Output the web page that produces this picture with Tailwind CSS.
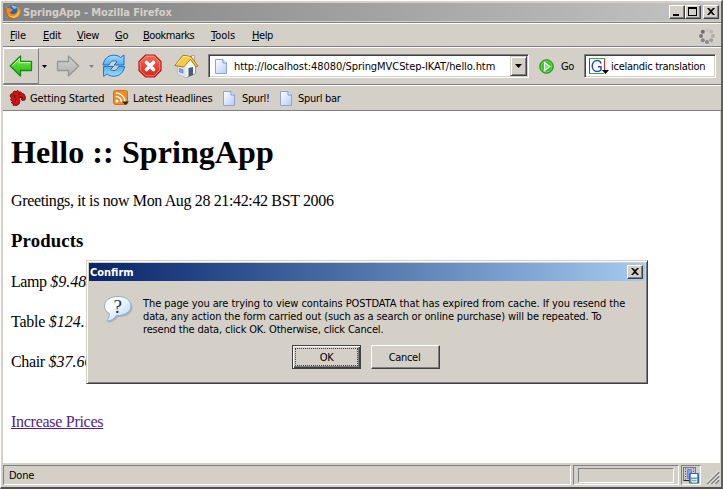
<!DOCTYPE html>
<html lang="en">
<head>
<meta charset="utf-8">
<title>SpringApp - Mozilla Firefox</title>
<script src="https://cdn.jsdelivr.net/npm/@tailwindcss/browser@4"></script>
</head>
<body class="w-[723px] h-[489px] overflow-hidden">
<svg width="0" height="0" class="absolute">
  <defs>
    <linearGradient id="green" x1="0" y1="0" x2="0" y2="1"><stop offset="0" stop-color="#b5f58c"/><stop offset=".45" stop-color="#4fd62f"/><stop offset="1" stop-color="#2fb41c"/></linearGradient>
    <linearGradient id="grey" x1="0" y1="0" x2="0" y2="1"><stop offset="0" stop-color="#d2d2d0"/><stop offset="1" stop-color="#b0b0ae"/></linearGradient>
    <linearGradient id="blue" x1="0" y1="0" x2="0" y2="1"><stop offset="0" stop-color="#a4dcfa"/><stop offset="1" stop-color="#4fb0ee"/></linearGradient>
    <linearGradient id="red" x1="0" y1="0" x2="0" y2="1"><stop offset="0" stop-color="#f4705a"/><stop offset="1" stop-color="#d8201c"/></linearGradient>
    <linearGradient id="paper" x1="0" y1="0" x2="1" y2="1"><stop offset="0" stop-color="#fff"/><stop offset="1" stop-color="#b4cdf8"/></linearGradient>
    <linearGradient id="bubble" x1="0" y1="0" x2="1" y2="1"><stop offset="0.3" stop-color="#fff"/><stop offset="1" stop-color="#a8d4f6"/></linearGradient>
    <symbol id="page" viewBox="0 0 12 15"><path d="M.5.5h7.500l3.500 3.500v10.500h-11z" fill="url(#paper)" stroke="#8fa3d8"/><path d="M8 .5v3.500h3.500" fill="#e8f0ff" stroke="#7d93cf"/></symbol>
  </defs>
</svg>
<div class="relative w-[723px] h-[489px] bg-[#d4d0c8] border-l border-t border-l-white border-t-white border-r-2 border-r-[#606060] border-b-2 border-b-[#505050] pl-[2px] pt-[2px] flex flex-col text-black text-[11px] leading-[13px] font-['DejaVu_Sans_Condensed','DejaVu_Sans',sans-serif] whitespace-nowrap">
  <!-- title bar -->
  <header class="h-[18px] w-[717px] shrink-0 bg-linear-to-r from-[#808080] to-[#c4c4c4] flex items-center">
    <svg class="ml-[2px] shrink-0" width="16" height="16" viewBox="0 0 16 16"><circle cx="8.500" cy="7.500" r="6.500" fill="#2c63b4"/><path d="M6 2c3-1 5 0 6 2l-3 1z" fill="#7fc0ee"/><path d="M1 3l2 1.500 2-1.500c0 2 1 2 3 2.500l-1 1.500-2 1c1 3 5 3 7 0 .8-1.500.5-4-1-6 3 1 5 4 4.500 7-.6 3-4 5-7 5-5 0-8-4-7.500-9z" fill="#f08a1c"/><path d="M14 5c2 5-2 9-6 9-3 0-5-1.500-6-4 3 3 8 3 10 0 1-1.500 1.500-3 2-5z" fill="#fbc233"/><path d="M1 4c-1 5 2 10 7 10.500" fill="none" stroke="#c9501a"/></svg>
    <span class="ml-[2px] font-bold text-[#d4d0c8] tracking-[-0.1px]">SpringApp - Mozilla Firefox</span>
    <div class="ml-auto mr-px flex text-black">
      <div class="w-4 h-[14px] border border-t-white border-l-white border-r-[#404040] border-b-[#404040] shadow-[inset_-1px_-1px_#808080] bg-[#d4d0c8]"><svg width="14" height="12"><path d="M3 8h6v2H3z"/></svg></div>
      <div class="w-4 h-[14px] border border-t-white border-l-white border-r-[#404040] border-b-[#404040] shadow-[inset_-1px_-1px_#808080] bg-[#d4d0c8]"><svg width="14" height="12"><path d="M2 1h9v9H2zM3 3v6h7V3z" fill-rule="evenodd"/></svg></div>
      <div class="ml-[2px] w-4 h-[14px] border border-t-white border-l-white border-r-[#404040] border-b-[#404040] shadow-[inset_-1px_-1px_#808080] bg-[#d4d0c8]"><svg width="14" height="12"><path d="M3 2h2l2 2 2-2h2L8 5.500 11 9H9L7 7 5 9H3l3-3.500z"/></svg></div>
    </div>
  </header>
  <!-- menu bar -->
  <nav class="mt-px h-[25px] w-[718px] shrink-0 border-t border-t-[#808080] border-b border-b-[#808080] shadow-[inset_0_1px_white] flex items-center pl-[7px] pt-[2px]">
    <span class="w-[33px] tracking-[-0.15px]"><u>F</u>ile</span>
    <span class="w-[34px] tracking-[-0.3px]"><u>E</u>dit</span>
    <span class="w-[38px] tracking-[-0.4px]"><u>V</u>iew</span>
    <span class="w-[28px] tracking-[-0.3px]"><u>G</u>o</span>
    <span class="w-[68px] tracking-[-0.45px]"><u>B</u>ookmarks</span>
    <span class="w-[41px]"><u>T</u>ools</span>
    <span class="tracking-[-0.4px]"><u>H</u>elp</span>
    <svg class="ml-auto mr-[6px]" width="16" height="16" viewBox="0 0 16 16"><g><circle cx="8" cy="2" r="2" fill="#c8c5c0"/><circle cx="12.200" cy="3.800" r="2" fill="#bcb9b5"/><circle cx="14" cy="8" r="2" fill="#b0aeaa"/><circle cx="12.200" cy="12.200" r="2" fill="#a09f9c"/><circle cx="8" cy="14" r="2" fill="#8c8b89"/><circle cx="3.800" cy="12.200" r="2" fill="#858482"/><circle cx="2" cy="8" r="2" fill="#7b7a79"/><circle cx="3.800" cy="3.800" r="2" fill="#6e6d6c"/></g></svg>
  </nav>
  <!-- navigation toolbar -->
  <div class="h-[38px] w-[718px] shrink-0 border-t border-t-white border-b border-b-[#808080] flex items-center">
    <div class="w-9 h-9 shrink-0 border border-t-white border-l-white border-r-[#808080] border-b-[#808080] flex items-center justify-center">
      <svg width="24" height="22" viewBox="0 0 24 22"><path d="M1.200 11L11.500 1v5.500h11v9h-11V21z" fill="url(#green)" stroke="#158a16" stroke-width="1.300" stroke-linejoin="round"/><path d="M3.200 10.700L10.500 3.500V7.600h11" fill="none" stroke="#d2fbb8"/></svg>
    </div>
    <svg class="ml-[3px] shrink-0" width="5" height="3"><path d="M0 0h5L2.500 3z"/></svg>
    <svg class="ml-[9px] shrink-0" width="24" height="22" viewBox="0 0 24 22"><path d="M22.800 11L12.500 1v5.500h-11v9h11V21z" fill="url(#grey)" stroke="#969694" stroke-width="1.300" stroke-linejoin="round"/></svg>
    <svg class="ml-[9px] shrink-0" width="5" height="3"><path d="M0 0h5L2.500 3z" fill="#808080"/></svg>
    <svg class="ml-[8px] shrink-0" width="24" height="24" viewBox="0 0 24 24"><path id="half" d="M1 11C2 4.500 6.500 1.200 11.800 1.200c3 0 5.200.8 6.700 2.300L22 1v10H12l3.200-3.200C12 5.800 8.500 7 7 11z" fill="url(#blue)" stroke="#1f6fc4" stroke-linejoin="round"/><use href="#half" transform="rotate(180 11.800 11.700)"/></svg>
    <svg class="ml-[12px] shrink-0" width="24" height="24" viewBox="0 0 24 24"><path d="M7.500 1h9L23 7.500v9L16.500 23h-9L1 16.500v-9z" fill="url(#red)" stroke="#b01818" stroke-width="1.200"/><path d="M8 2.200h8L21.800 8v8L16 21.800H8L2.200 16V8z" fill="none" stroke="#f59a88" stroke-width=".8"/><path d="M8.500 8.500l7 7m0-7l-7 7" stroke="#fff" stroke-width="3.600" stroke-linecap="round"/></svg>
    <svg class="ml-[12px] shrink-0" width="25" height="24" viewBox="0 0 25 24"><path d="M3.500 11.500V20l9 3.500 9-4V11L17 4z" fill="#f2f4f8" stroke="#8289a0" stroke-width=".8"/><path d="M3.500 12v8l9 3.500V13L9 9z" fill="#dfe4ee"/><path d="M17.500 1.500h3V8l-3-3z" fill="#e8ecf4" stroke="#8a90a5" stroke-width=".7"/><path d="M.8 11.500L9 1.200 17 2.600 24 12l-2 1-5.500-7.500L9.500 13z" fill="#f4cb45" stroke="#a37a14" stroke-linejoin="round"/><path d="M2.500 10.500L9.500 2.300l6 1" fill="none" stroke="#fdec8e"/><path d="M14.500 14l4.500-1v8l-4.500 1.800z" fill="#4a5a78"/><path d="M5.500 14.500l3.500 1.200v3.500L5.500 18z" fill="#7fa6de" stroke="#657594" stroke-width=".6"/></svg>
    <div class="ml-[9px] w-[321px] h-[24px] shrink-0 bg-white border border-t-[#808080] border-l-[#808080] border-r-white border-b-white p-px shadow-[inset_1px_1px_#404040,inset_-1px_-1px_#d4d0c8] flex items-center">
      <svg class="ml-[5px] shrink-0" width="12" height="15"><use href="#page"/></svg>
      <span class="ml-[7px] mt-px tracking-[-0.06px]">http://localhost:48080/SpringMVCStep-IKAT/hello.htm</span>
      <div class="ml-auto w-[17px] h-5 shrink-0 border border-t-[#d4d0c8] border-l-[#d4d0c8] border-r-[#404040] border-b-[#404040] shadow-[inset_1px_1px_white,inset_-1px_-1px_#808080] bg-[#d4d0c8] flex items-center justify-center"><svg width="7" height="4"><path d="M0 0h7L3.500 4z"/></svg></div>
    </div>
    <svg class="ml-[10px] shrink-0" width="15" height="15" viewBox="0 0 15 15"><circle cx="7.500" cy="7.500" r="6.800" fill="#37bd25" stroke="#1e8f18"/><circle cx="7.500" cy="7.500" r="5.300" fill="none" stroke="#7be267" stroke-width=".8"/><path d="M5.500 3.500v8l5.500-4z" fill="#7ee668" stroke="#fff" stroke-width="1.200"/></svg>
    <span class="ml-[7px] mt-px w-[23px] tracking-[-0.3px]">Go</span>
    <div class="w-[132px] h-[24px] shrink-0 bg-white border border-t-[#808080] border-l-[#808080] border-r-white border-b-white shadow-[inset_1px_1px_#404040,inset_-1px_-1px_#d4d0c8] flex items-center">
      <svg class="ml-[4px] shrink-0" width="21" height="17" viewBox="0 0 21 17"><path d="M0 0h16v16H0z" fill="#fff"/><path d="M.5 16V0" stroke="#1e50d2"/><path d="M0 .5h16" stroke="#36a83a"/><path d="M15.500 1v11" stroke="#d42a20"/><path d="M0 15.500h15" stroke="#36a83a"/><path d="M12 5.500C11.500 3.200 10 2.500 8.200 2.500 5.200 2.500 3.200 5 3.200 8s2 5.500 5 5.500c1.600 0 2.800-.6 3.800-1.500V8.800H9" fill="none" stroke="#2848b8" stroke-width="1.500"/><path d="M13 12h7l-3.500 4z"/></svg>
      <span class="ml-[1px] mt-px tracking-[-0.28px]">icelandic translation</span>
    </div>
  </div>
  <!-- bookmarks toolbar -->
  <div class="h-[26px] w-[718px] shrink-0 border-t border-t-white border-b border-b-[#808080] flex items-center pl-[6px]">
    <svg class="shrink-0" width="17" height="16" viewBox="0 0 17 16"><path d="M1 6l1-2 2-1 1-2 2 .5L9 .5l1 1.500h2l1 1.500 2 .5 1.500 3-.5 3-3 .5-1-1.500 2-.5-3-1-1 1.500 1 2-1 3-3 2-1-1-2 .5.500-2-2-.5 1-2-2-1 1-2z" fill="#d80f0f" stroke="#5a0806" stroke-width=".8"/><path d="M9 4.500l2-.5M5 5l1 3m1 1l-1 3m4-5l4 .5" stroke="#3a0504"/></svg>
    <span class="ml-[4px] mt-px w-[83px] tracking-[-0.15px]">Getting Started</span>
    <svg class="shrink-0" width="16" height="16" viewBox="0 0 16 16"><rect x=".5" y=".5" width="14" height="14" rx="2" fill="#f28a22" stroke="#dc6c10"/><circle cx="4" cy="11" r="1.500" fill="#fff"/><path d="M2.700 6.500a5.500 5.500 0 0 1 5.800 5.500M2.700 3a9 9 0 0 1 9.300 9" fill="none" stroke="#fff" stroke-width="1.600"/><path d="M9 11.500h7L12.500 15z" fill="#222"/></svg>
    <span class="ml-[4px] mt-px w-[90px] tracking-[-0.2px]">Latest Headlines</span>
    <svg class="shrink-0" width="12" height="15"><use href="#page"/></svg>
    <span class="ml-[7px] mt-px w-[38px] tracking-[-0.35px]">Spurl!</span>
    <svg class="shrink-0" width="12" height="15"><use href="#page"/></svg>
    <span class="ml-[6px] mt-px tracking-[-0.3px]">Spurl bar</span>
  </div>
  <!-- page -->
  <main class="w-[717px] h-[352px] shrink-0 bg-white px-2 font-['Liberation_Serif',serif] text-[16px] leading-[20px]">
    <h1 class="pt-[22px] text-[32px] leading-[38px] font-bold tracking-[0.08px]">Hello :: SpringApp</h1>
    <p class="mt-[20px] tracking-[-0.36px]">Greetings, it is now Mon Aug 28 21:42:42 BST 2006</p>
    <h3 class="mt-[20px] text-[18.700px] font-bold tracking-[0.15px]">Products</h3>
    <p class="mt-[21px]"><span class="tracking-[-0.4px]">Lamp </span><i>$9.48</i></p>
    <p class="mt-[20px]"><span class="tracking-[-0.25px]">Table </span><i>$124.75</i></p>
    <p class="mt-[20px]"><span class="tracking-[-0.35px]">Chair </span><i>$37.66</i></p>
    <p class="mt-[40px]"><a class="text-[#551a8b] underline tracking-[-0.28px]">Increase Prices</a></p>
  </main>
  <!-- status bar -->
  <footer class="w-[718px] h-[24px] shrink-0 pt-[2px] flex gap-[2px]">
    <div class="w-[568px] h-5 border border-t-[#808080] border-l-[#808080] border-r-white border-b-white pl-[5px] flex items-center tracking-[-0.25px]">Done</div>
    <div class="w-[106px] h-5 border border-t-[#808080] border-l-[#808080] border-r-white border-b-white pl-1 pt-[2px]"><div class="w-[96px] h-[15px] border border-t-[#808080] border-l-[#808080] border-r-white border-b-white"></div></div>
    <div class="w-[20px] h-5 border border-t-[#808080] border-l-[#808080] border-r-white border-b-white"><svg class="ml-px mt-px" width="16" height="17" viewBox="0 0 16 17"><rect x=".5" y=".5" width="12" height="13" fill="#c8c8cc" stroke="#77787e"/><path d="M2.500 1.500v11M10.500 1.500v11" stroke="#55565c" stroke-dasharray="1 1.500"/><path d="M4.500 2.500h4v9h-4z" fill="#8a9ce8" stroke="#7d80b4"/><path d="M1 13.500h6" stroke="#222"/><path d="M6.500 6.500h9v9.500h-9z" fill="#5b92e2" stroke="#2d62b4"/><path d="M8 7h6v3.500H8zM8.500 12h5.500v3.500H8.500z" fill="#fff"/><path d="M9 13.500h4.500" stroke="#6cc83c" stroke-width="1.500"/></svg></div>
    <svg class="ml-[4px] mt-[6px] shrink-0" width="13" height="13" viewBox="0 0 13 13"><path d="M0 13L12 1M4 13l8-8M8 13l4-4" stroke="#808080" stroke-width="1.800"/><path d="M-1.500 13L12-.5M2.500 13L12 3.500M6.500 13L12 7.500" stroke="#fff"/></svg>
  </footer>
  <!-- confirm dialog -->
  <section class="absolute left-[85px] top-[259px] w-[562px] h-[124px] bg-[#d4d0c8] border border-t-[#d4d0c8] border-l-[#d4d0c8] border-r-[#404040] border-b-[#404040] shadow-[inset_1px_1px_white,inset_-1px_-1px_#808080] p-[2px]">
    <div class="h-[18px] bg-linear-to-r from-[#0a246a] to-[#a6caf0] flex items-center justify-between pl-px pr-[2px]">
      <span class="font-bold text-white">Confirm</span>
      <div class="w-4 h-[14px] border border-t-white border-l-white border-r-[#404040] border-b-[#404040] shadow-[inset_-1px_-1px_#808080] bg-[#d4d0c8]"><svg width="14" height="12"><path d="M3 2h2l2 2 2-2h2L8 5.500 11 9H9L7 7 5 9H3l3-3.500z"/></svg></div>
    </div>
    <div class="flex pl-[14px] pt-[14px] h-[64px]">
      <svg class="shrink-0" width="32" height="32" viewBox="0 0 32 32"><path d="M16 3C8 3 2.500 7 2.500 12.500c0 3.500 2 6 5 7.700 0 3-1 5-3 7.300 5 0 8.500-2.500 10.500-5.500 8.500.5 14.500-4 14.500-9.500S24 3 16 3z" fill="#8f959f" opacity=".55"/><path d="M15 1.500C7 1.500 1.500 5.500 1.500 11c0 3.500 2 6.200 5 7.700 0 3-1 5-3 7.300 5 0 8-2.500 10-5.500 8.500.5 14.500-4 14.500-9.500S23 1.500 15 1.500z" fill="url(#bubble)" stroke="#8faed6"/><text x="10.500" y="17.500" font-family="Liberation Serif" font-size="19" fill="#26303c">?</text></svg>
      <div class="ml-[8px] pt-[2px]">
        <div class="tracking-[-0.085px]">The page you are trying to view contains POSTDATA that has expired from cache. If you resend the</div>
        <div class="tracking-[-0.13px]">data, any action the form carried out (such as a search or online purchase) will be repeated. To</div>
        <div class="tracking-[-0.17px]">resend the data, click OK. Otherwise, click Cancel.</div>
      </div>
    </div>
    <div class="flex gap-[10px] pl-[203px]">
      <div class="w-[69px] h-6 border border-[#404040] bg-[#d4d0c8] shadow-[inset_1px_1px_white,inset_-1px_-1px_#404040,inset_-2px_-2px_#808080] p-[2px]"><div class="h-[18px] w-[63px] border border-dotted border-[#404040] flex items-center justify-center tracking-[-0.4px]">OK</div></div>
      <div class="w-[69px] h-6 border border-t-white border-l-white border-r-[#404040] border-b-[#404040] shadow-[inset_-1px_-1px_#808080] flex items-center justify-center tracking-[-0.3px] pr-[2px]">Cancel</div>
    </div>
  </section>
</div>
</body>
</html>
